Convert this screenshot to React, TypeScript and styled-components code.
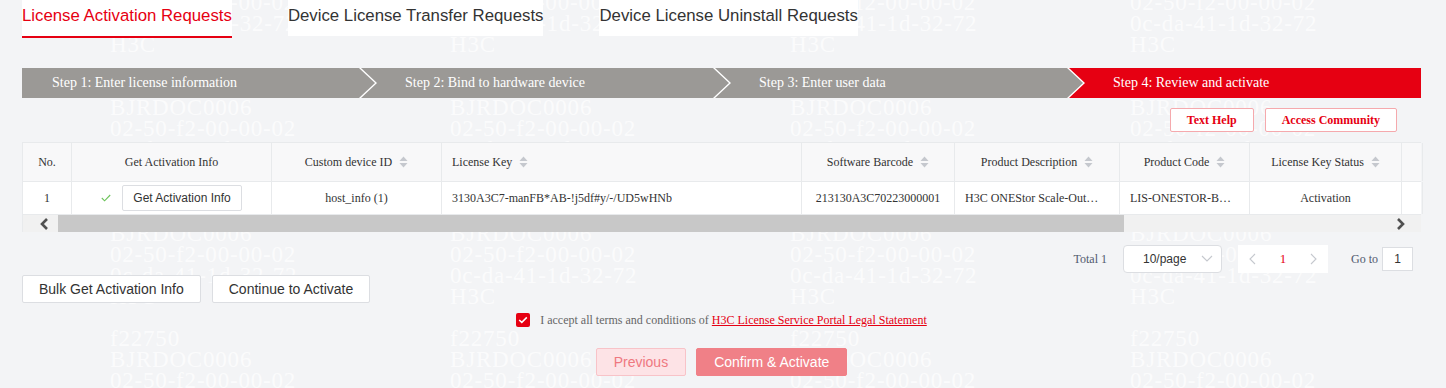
import React from 'react';
import styled, { createGlobalStyle } from 'styled-components';

const RED = '#e60012';
const LINE = '#e8eaec';
const SANS = '"Liberation Sans", Arial, sans-serif';
const SERIF = '"Liberation Serif", "Times New Roman", serif';

const GlobalStyle = createGlobalStyle`
  html, body {
    margin: 0;
    padding: 0;
    background: #f3f4f6;
    font-family: ${SERIF};
    color: #333;
  }
  * { box-sizing: border-box; }
`;

const Page = styled.div`
  position: relative;
  z-index: 0;
  height: 388px;
  overflow: hidden;
  padding: 0 25px 0 22px;
`;

// faint tiled text watermark, painted under the page content
const Watermark = styled.div`
  position: absolute;
  top: -50px;
  left: 0;
  right: 0;
  bottom: 0;
  display: flex;
  padding-left: 110px;
  pointer-events: none;
  z-index: -1;
`;

const WatermarkColumn = styled.div`
  flex: 0 0 340px;
  font-family: ${SERIF};
  font-size: 23px;
  line-height: 21px;
  letter-spacing: 0.8px;
  color: rgba(255, 255, 255, 0.7);
  white-space: pre;
`;

const Tabs = styled.div`
  display: flex;
  gap: 56px;
  height: 38px;
`;

const Tab = styled.div<{ $active?: boolean }>`
  height: ${(p) => (p.$active ? 38 : 36)}px;
  background: #fff;
  font-family: ${SANS};
  font-size: 16.8px;
  line-height: 32px;
  color: ${(p) => (p.$active ? RED : '#333')};
  border-bottom: ${(p) => (p.$active ? `2px solid ${RED}` : 'none')};
  white-space: nowrap;
`;

const Steps = styled.div`
  display: flex;
  margin-top: 30px;
  height: 30px;
  background: #fff;
`;

const Step = styled.div<{ $pos: 'first' | 'middle' | 'last'; $active?: boolean }>`
  flex: ${(p) => (p.$pos === 'first' ? '0 0 353px' : p.$pos === 'middle' ? '0 0 368px' : '1 1 auto')};
  margin-left: ${(p) => (p.$pos === 'first' ? 0 : -14)}px;
  padding-left: ${(p) => (p.$pos === 'first' ? 30 : 44)}px;
  background: ${(p) => (p.$active ? RED : '#9b9996')};
  color: #fff;
  font-size: 14px;
  line-height: 30px;
  white-space: nowrap;
  clip-path: ${(p) =>
    p.$pos === 'first'
      ? 'polygon(0 0, calc(100% - 16px) 0, 100% 50%, calc(100% - 16px) 100%, 0 100%)'
      : p.$pos === 'middle'
      ? 'polygon(0 0, calc(100% - 16px) 0, 100% 50%, calc(100% - 16px) 100%, 0 100%, 16px 50%)'
      : 'polygon(0 0, 100% 0, 100% 100%, 0 100%, 16px 50%)'};
`;

const HelpRow = styled.div`
  display: flex;
  justify-content: flex-end;
  gap: 11px;
  margin-top: 10px;
  padding-right: 24px;
`;

const HelpButton = styled.button`
  height: 24px;
  padding: 0 16px;
  background: #fff;
  border: 1px solid #f5a9ad;
  border-radius: 2px;
  color: ${RED};
  font-family: ${SERIF};
  font-size: 12px;
  font-weight: bold;
`;

const Table = styled.div`
  margin-top: 10px;
  border-top: 1px solid ${LINE};
  border-left: 1px solid ${LINE};
`;

const Row = styled.div<{ $head?: boolean }>`
  display: grid;
  grid-template-columns: 49px 200px 170px 360px 153px 165px 130px 152px 1fr;
  height: ${(p) => (p.$head ? 39 : 33)}px;
  background: ${(p) => (p.$head ? '#f8f8f9' : '#fff')};
  border-bottom: 1px solid ${LINE};
  font-size: 12px;
  color: #333;
`;

const Cell = styled.div<{ $left?: boolean }>`
  display: flex;
  align-items: center;
  justify-content: ${(p) => (p.$left ? 'flex-start' : 'center')};
  gap: 7px;
  padding: 0 10px;
  border-right: 1px solid ${LINE};
  white-space: nowrap;
  overflow: hidden;
  min-width: 0;
`;

const ActionCell = styled(Cell)`
  gap: 11px;
`;

const SmallButton = styled.button`
  height: 26px;
  padding: 0 10px;
  background: #fff;
  border: 1px solid #dcdee2;
  border-radius: 2px;
  font-family: ${SANS};
  font-size: 12px;
  color: #333;
`;

const Scrollbar = styled.div`
  display: flex;
  align-items: center;
  height: 17px;
  background: #f1f1f1;
`;

const ScrollLeft = styled.div`
  flex: 0 0 35px;
  display: flex;
  align-items: center;
  padding-left: 17px;
`;

const ScrollThumb = styled.div`
  flex: 0 0 1066px;
  height: 17px;
  background: #c8c8c8;
`;

const ScrollRight = styled.div`
  flex: 1;
  display: flex;
  justify-content: flex-end;
  padding-right: 16px;
`;

const Pagination = styled.div`
  display: flex;
  justify-content: flex-end;
  align-items: center;
  margin-top: 13px;
  padding-right: 8px;
  height: 28px;
  font-size: 12px;
  color: #515a6e;
`;

const Total = styled.span`
  margin-right: 16px;
`;

const PageSize = styled.div`
  display: flex;
  align-items: center;
  justify-content: space-between;
  width: 99px;
  height: 28px;
  padding: 0 8px 0 19px;
  background: #fff;
  border: 1px solid #dcdee2;
  border-radius: 4px;
  font-family: ${SANS};
  font-size: 12px;
  color: #333;
  margin-right: 16px;
`;

const Pager = styled.div`
  display: flex;
  height: 28px;
  background: #fff;
  margin-right: 23px;
`;

const PagerItem = styled.div<{ $current?: boolean }>`
  width: 30px;
  display: flex;
  align-items: center;
  justify-content: center;
  font-size: 13px;
  color: ${(p) => (p.$current ? RED : '#c5c8ce')};
`;

const GoTo = styled.span`
  margin-right: 4px;
`;

const GoInput = styled.div`
  width: 31px;
  height: 24px;
  border: 1px solid #dcdee2;
  background: #fff;
  display: flex;
  align-items: center;
  justify-content: center;
  font-family: ${SANS};
  font-size: 12px;
  color: #333;
`;

const Actions = styled.div`
  display: flex;
  gap: 11px;
  margin-top: 2px;
`;

const Button = styled.button`
  height: 28px;
  padding: 0 16px;
  background: #fff;
  border: 1px solid #dcdee2;
  border-radius: 2px;
  font-family: ${SANS};
  font-size: 14px;
  color: #333;
`;

const Agreement = styled.div`
  display: flex;
  justify-content: center;
  align-items: center;
  gap: 10px;
  margin-top: 10px;
  height: 14px;
  font-size: 12px;
  color: #666;
`;

const Checkbox = styled.span`
  width: 14px;
  height: 14px;
  border-radius: 2px;
  background: ${RED};
  display: flex;
  align-items: center;
  justify-content: center;
`;

const Link = styled.a`
  color: ${RED};
  text-decoration: underline;
`;

const Footer = styled.div`
  display: flex;
  justify-content: center;
  gap: 10px;
  margin-top: 21px;
`;

const FooterButton = styled.button<{ $primary?: boolean }>`
  height: 28px;
  padding: 0 17px;
  border-radius: 2px;
  border: 1px solid ${(p) => (p.$primary ? '#f08087' : '#f8c3c8')};
  background: ${(p) => (p.$primary ? '#f08087' : '#fde3e6')};
  color: ${(p) => (p.$primary ? '#fff' : '#ef7880')};
  font-family: ${SANS};
  font-size: 14px;
`;

const SortIcon = () => (
  <svg width="9" height="12" viewBox="0 0 9 12">
    <path d="M4.5 0.5 L8.5 5 L0.5 5 Z" fill="#c5c8ce" />
    <path d="M0.5 7 L8.5 7 L4.5 11.5 Z" fill="#c5c8ce" />
  </svg>
);

const Check = () => (
  <svg width="10" height="8" viewBox="0 0 10 8">
    <path d="M0.8 4 L3.6 6.8 L9.2 1" stroke="#6cc35a" strokeWidth="1.1" fill="none" />
  </svg>
);

const Chevron = ({ dir, color, bold }: { dir: 'left' | 'right' | 'down'; color: string; bold?: boolean }) => {
  const d = dir === 'left' ? 'M7 1 L2 6 L7 11' : dir === 'right' ? 'M3 1 L8 6 L3 11' : 'M1 3 L6 8 L11 3';
  return (
    <svg width={dir === 'down' ? 12 : 10} height="12" viewBox={dir === 'down' ? '0 0 12 12' : '0 0 10 12'}>
      <path d={d} stroke={color} strokeWidth={bold ? 2.6 : 1.1} fill="none" />
    </svg>
  );
};

const Tick = () => (
  <svg width="10" height="8" viewBox="0 0 10 8">
    <path d="M1.2 4 L3.8 6.4 L8.8 1.4" stroke="#fff" strokeWidth="1.5" fill="none" />
  </svg>
);

const watermarkLines = Array.from({ length: 4 })
  .map(() => 'f22750\nBJRDOC0006\n02-50-f2-00-00-02\n0c-da-41-1d-32-72\nH3C\n\n')
  .join('');

const headers: { label: string; sort?: boolean; left?: boolean }[] = [
  { label: 'No.' },
  { label: 'Get Activation Info' },
  { label: 'Custom device ID', sort: true },
  { label: 'License Key', sort: true, left: true },
  { label: 'Software Barcode', sort: true },
  { label: 'Product Description', sort: true },
  { label: 'Product Code', sort: true },
  { label: 'License Key Status', sort: true },
  { label: '' },
];

export default function App() {
  return (
    <>
      <GlobalStyle />
      <Page>
        <Watermark>
          {[0, 1, 2, 3].map((i) => (
            <WatermarkColumn key={i}>{watermarkLines}</WatermarkColumn>
          ))}
        </Watermark>

        <Tabs>
          <Tab $active>License Activation Requests</Tab>
          <Tab>Device License Transfer Requests</Tab>
          <Tab>Device License Uninstall Requests</Tab>
        </Tabs>

        <Steps>
          <Step $pos="first">Step 1: Enter license information</Step>
          <Step $pos="middle">Step 2: Bind to hardware device</Step>
          <Step $pos="middle">Step 3: Enter user data</Step>
          <Step $pos="last" $active>
            Step 4: Review and activate
          </Step>
        </Steps>

        <HelpRow>
          <HelpButton>Text Help</HelpButton>
          <HelpButton>Access Community</HelpButton>
        </HelpRow>

        <Table>
          <Row $head>
            {headers.map((h, i) => (
              <Cell key={i} $left={h.left}>
                {h.label}
                {h.sort && <SortIcon />}
              </Cell>
            ))}
          </Row>
          <Row>
            <Cell>1</Cell>
            <ActionCell>
              <Check />
              <SmallButton>Get Activation Info</SmallButton>
            </ActionCell>
            <Cell>host_info (1)</Cell>
            <Cell $left>3130A3C7-manFB*AB-!j5df#y/-/UD5wHNb</Cell>
            <Cell>213130A3C70223000001</Cell>
            <Cell $left>H3C ONEStor Scale-Out…</Cell>
            <Cell $left>LIS-ONESTOR-B…</Cell>
            <Cell>Activation</Cell>
            <Cell />
          </Row>
          <Scrollbar>
            <ScrollLeft>
              <Chevron dir="left" color="#505050" bold />
            </ScrollLeft>
            <ScrollThumb />
            <ScrollRight>
              <Chevron dir="right" color="#505050" bold />
            </ScrollRight>
          </Scrollbar>
        </Table>

        <Pagination>
          <Total>Total 1</Total>
          <PageSize>
            10/page
            <Chevron dir="down" color="#c5c8ce" />
          </PageSize>
          <Pager>
            <PagerItem>
              <Chevron dir="left" color="#c5c8ce" />
            </PagerItem>
            <PagerItem $current>1</PagerItem>
            <PagerItem>
              <Chevron dir="right" color="#c5c8ce" />
            </PagerItem>
          </Pager>
          <GoTo>Go to</GoTo>
          <GoInput>1</GoInput>
        </Pagination>

        <Actions>
          <Button>Bulk Get Activation Info</Button>
          <Button>Continue to Activate</Button>
        </Actions>

        <Agreement>
          <Checkbox>
            <Tick />
          </Checkbox>
          <span>
            I accept all terms and conditions of <Link>H3C License Service Portal Legal Statement</Link>
          </span>
        </Agreement>

        <Footer>
          <FooterButton>Previous</FooterButton>
          <FooterButton $primary>Confirm &amp; Activate</FooterButton>
        </Footer>
      </Page>
    </>
  );
}
